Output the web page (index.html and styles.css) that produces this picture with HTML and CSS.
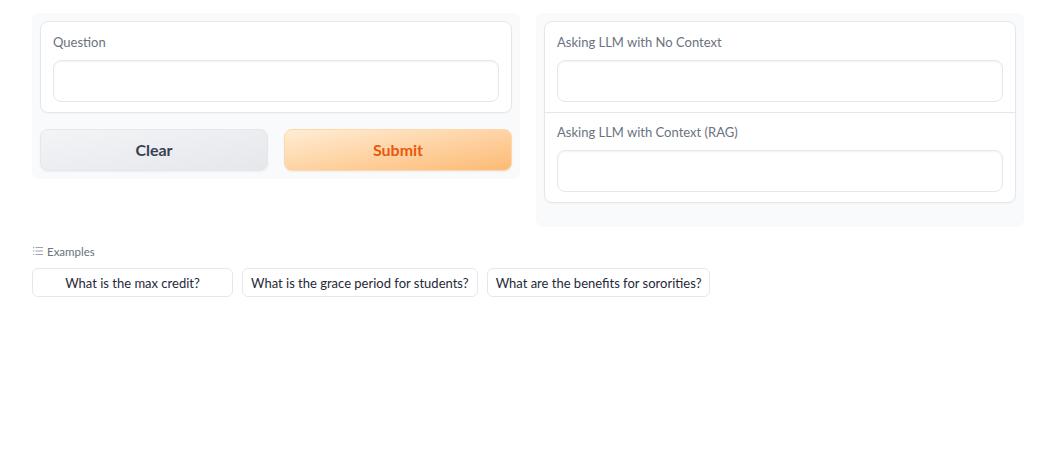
FILE: index.html
```html
<!DOCTYPE html>
<html>
<head>
<meta charset="utf-8">
<link rel="stylesheet" href="styles.css">
</head>
<body>
<div class="app">
  <div class="row">
    <div class="panel">
      <div class="block">
        <div class="label">Question</div>
        <div class="input"></div>
      </div>
      <div class="buttons">
        <button class="btn secondary">Clear</button>
        <button class="btn primary">Submit</button>
      </div>
    </div>
    <div class="panel panel-right">
      <div class="block stacked">
        <div class="sub">
          <div class="label">Asking LLM with No Context</div>
          <div class="input"></div>
        </div>
        <div class="sub">
          <div class="label">Asking LLM with Context (RAG)</div>
          <div class="input"></div>
        </div>
      </div>
    </div>
  </div>
  <div class="examples">
    <div class="ex-label">
      <svg width="10" height="10" viewBox="0 0 10 10" class="ex-icon">
        <rect x="0" y="1" width="1.2" height="1" fill="#9ca3af"/>
        <rect x="2.5" y="1" width="7.5" height="1" fill="#9ca3af"/>
        <rect x="0" y="4.5" width="1.2" height="1" fill="#9ca3af"/>
        <rect x="2.5" y="4.5" width="7.5" height="1" fill="#9ca3af"/>
        <rect x="0" y="8" width="1.2" height="1" fill="#9ca3af"/>
        <rect x="2.5" y="8" width="7.5" height="1" fill="#9ca3af"/>
      </svg>
      <span>Examples</span>
    </div>
    <div class="ex-list">
      <button class="ex ex1">What is the max credit?</button>
      <button class="ex">What is the grace period for students?</button>
      <button class="ex">What are the benefits for sororities?</button>
    </div>
  </div>
</div>
</body>
</html>
```
FILE: styles.css
```css
* { box-sizing: border-box; }
html, body { margin: 0; padding: 0; background: #fff; }
body {
  font-family: "Source Sans Pro", Lato, "Noto Sans", sans-serif;
  color: #1f2937;
}
.app {
  padding: 13px 21px 0 32px;
}
.row {
  display: flex;
  gap: 16px;
  align-items: flex-start;
}
.panel {
  flex: 1;
  background: #f9fafb;
  border-radius: 8px;
  padding: 8px;
  display: flex;
  flex-direction: column;
  gap: 16px;
}
.panel-right {
  padding-bottom: 24px;
}
.block {
  background: #fff;
  border: 1px solid #e5e7eb;
  border-radius: 8px;
  padding: 12px 12px 10px;
  box-shadow: 0 1px 2px rgba(0,0,0,0.03);
}
.block.stacked { padding: 0; }
.sub { padding: 12px 12px 10px; }
.sub + .sub { border-top: 1px solid #e5e7eb; padding-top: 11px; }
.label {
  font-size: 13px;
  line-height: 16px;
  color: #6b7280;
  margin-bottom: 10px;
}
.input {
  height: 42px;
  border: 1px solid #e5e7eb;
  border-radius: 8px;
  background: #fff;
  box-shadow: inset 0 1px 2px rgba(0,0,0,0.05);
}
.buttons {
  display: flex;
  gap: 16px;
}
.btn {
  flex: 1;
  height: 42px;
  border-radius: 8px;
  font-family: inherit;
  font-size: 16px;
  font-weight: 700;
  cursor: pointer;
  box-shadow: 0 1px 2px rgba(0,0,0,0.05);
  padding-bottom: 2px;
}
.secondary {
  background: linear-gradient(to bottom right, #f3f4f6, #e5e7eb);
  border: 1px solid #e5e7eb;
  color: #374151;
}
.primary {
  background: linear-gradient(to bottom right, #ffedd5, #fdba74);
  border: 1px solid #fed7aa;
  color: #ea580c;
}
.examples {
  margin-top: 16px;
}
.ex-label {
  display: flex;
  align-items: center;
  gap: 4px;
  font-size: 11.5px;
  color: #6b7280;
  height: 16px;
  margin-left: 1px;
}
.ex-list {
  display: flex;
  gap: 9px;
  margin-top: 9px;
}
.ex {
  height: 29px;
  background: #fff;
  border: 1px solid #e5e7eb;
  border-radius: 6px;
  font-family: inherit;
  font-size: 13px;
  color: #1f2937;
  padding: 0 8px;
}
.ex1 { width: 201px; }
```
